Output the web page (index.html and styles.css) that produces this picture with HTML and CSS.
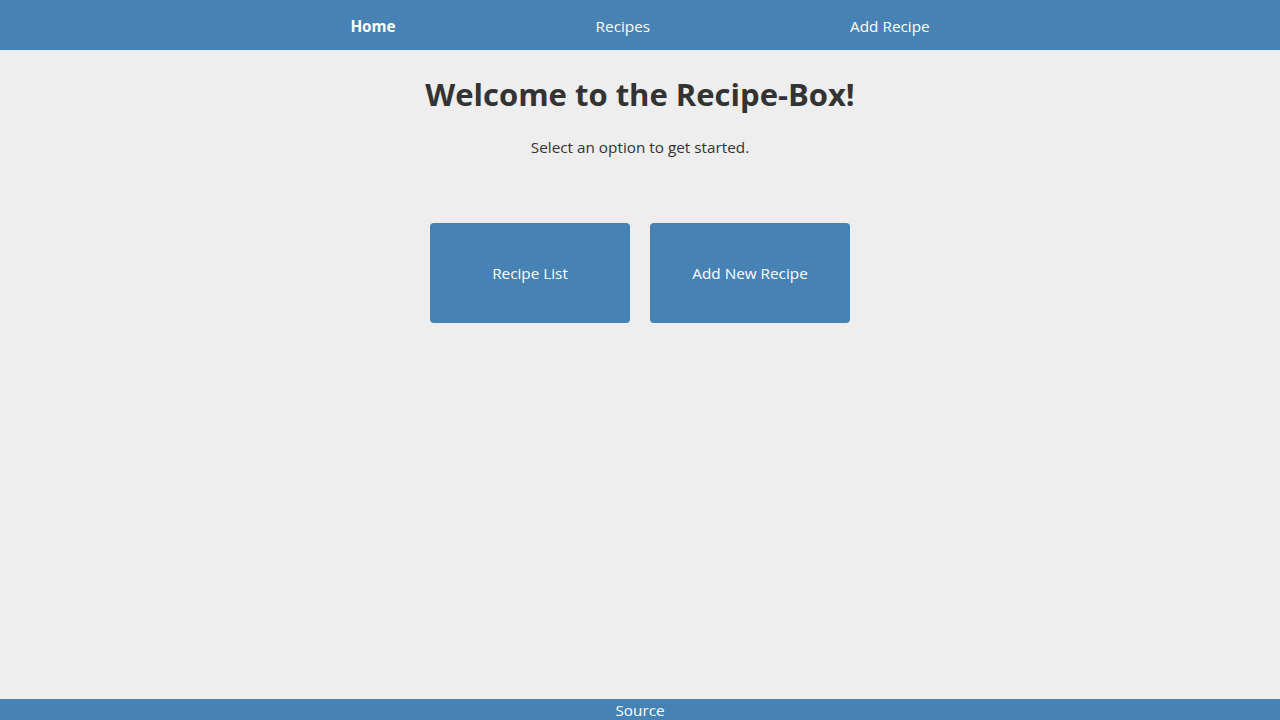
FILE: index.html
```html
<!DOCTYPE html>
<html lang="en">
<head>
<meta charset="utf-8">
<title>Recipe Box</title>
<link rel="stylesheet" href="styles.css">
</head>
<body>
<nav class="topnav">
  <ul class="nav-list">
    <li class="nav-item active">Home</li>
    <li class="nav-item">Recipes</li>
    <li class="nav-item">Add Recipe</li>
  </ul>
</nav>
<main class="home">
  <h1 class="title">Welcome to the Recipe-Box!</h1>
  <p class="subtitle">Select an option to get started.</p>
  <div class="options">
    <a class="option">Recipe List</a>
    <a class="option">Add New Recipe</a>
  </div>
</main>
<footer class="footer">Source</footer>
</body>
</html>
```
FILE: styles.css
```css
html, body {
  margin: 0;
  padding: 0;
  height: 100%;
}
body {
  background: #eeeeee;
  color: #333333;
  font-family: "Open Sans", "Noto Sans", sans-serif;
  font-size: 15.3px;
  display: flex;
  flex-direction: column;
}
.topnav {
  background: #4682b4;
  height: 50px;
  flex: none;
}
.nav-list {
  list-style: none;
  margin: 0;
  padding: 0;
  height: 50px;
  display: flex;
  justify-content: center;
  align-items: center;
  gap: 200px;
}
.nav-item {
  color: #ffffff;
  font-size: 15.3px;
  line-height: 20px;
  padding-top: 2px;
}
.nav-item.active {
  font-weight: 700;
}
.home {
  flex: 1;
  display: flex;
  flex-direction: column;
  align-items: center;
}
.title {
  margin: 24px 0 0;
  font-size: 31px;
  line-height: 40px;
  font-weight: 700;
  color: #333333;
}
.subtitle {
  margin: 23px 0 0;
  line-height: 20px;
  font-size: 15.3px;
}
.options {
  margin-top: 66px;
  display: flex;
  gap: 20px;
}
.option {
  width: 200px;
  height: 100px;
  background: #4682b4;
  color: #ffffff;
  border-radius: 4px;
  display: flex;
  align-items: center;
  justify-content: center;
  font-size: 15.3px;
}
.footer {
  flex: none;
  height: 21px;
  line-height: 22px;
  background: #4682b4;
  color: #ffffff;
  text-align: center;
  font-size: 15.3px;
}
```
